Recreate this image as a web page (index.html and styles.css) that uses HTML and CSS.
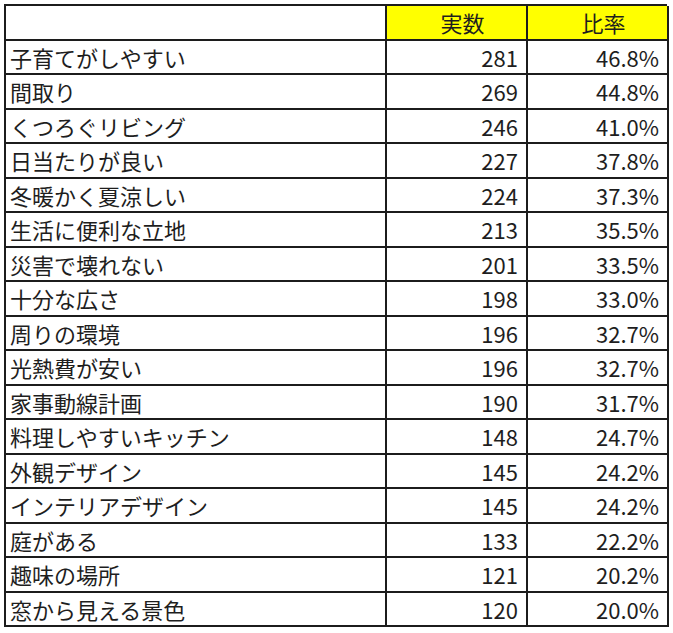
FILE: index.html
```html
<!DOCTYPE html>
<html lang="ja">
<head>
<meta charset="utf-8">
<link rel="stylesheet" href="styles.css">
</head>
<body>
<div class="table">
  <div class="cell label head-blank"></div><div class="cell head">実数</div><div class="cell head">比率</div>
  <div class="cell label">子育てがしやすい</div><div class="cell num">281</div><div class="cell num">46.8%</div>
  <div class="cell label">間取り</div><div class="cell num">269</div><div class="cell num">44.8%</div>
  <div class="cell label">くつろぐリビング</div><div class="cell num">246</div><div class="cell num">41.0%</div>
  <div class="cell label">日当たりが良い</div><div class="cell num">227</div><div class="cell num">37.8%</div>
  <div class="cell label">冬暖かく夏涼しい</div><div class="cell num">224</div><div class="cell num">37.3%</div>
  <div class="cell label">生活に便利な立地</div><div class="cell num">213</div><div class="cell num">35.5%</div>
  <div class="cell label">災害で壊れない</div><div class="cell num">201</div><div class="cell num">33.5%</div>
  <div class="cell label">十分な広さ</div><div class="cell num">198</div><div class="cell num">33.0%</div>
  <div class="cell label">周りの環境</div><div class="cell num">196</div><div class="cell num">32.7%</div>
  <div class="cell label">光熱費が安い</div><div class="cell num">196</div><div class="cell num">32.7%</div>
  <div class="cell label">家事動線計画</div><div class="cell num">190</div><div class="cell num">31.7%</div>
  <div class="cell label">料理しやすいキッチン</div><div class="cell num">148</div><div class="cell num">24.7%</div>
  <div class="cell label">外観デザイン</div><div class="cell num">145</div><div class="cell num">24.2%</div>
  <div class="cell label">インテリアデザイン</div><div class="cell num">145</div><div class="cell num">24.2%</div>
  <div class="cell label">庭がある</div><div class="cell num">133</div><div class="cell num">22.2%</div>
  <div class="cell label">趣味の場所</div><div class="cell num">121</div><div class="cell num">20.2%</div>
  <div class="cell label">窓から見える景色</div><div class="cell num">120</div><div class="cell num">20.0%</div>
</div>
</body>
</html>
```
FILE: styles.css
```css
html, body {
  margin: 0;
  padding: 0;
  background: #ffffff;
}
body {
  padding: 4px 0 0 4px;
  font-family: "Noto Sans CJK JP", "Noto Sans", sans-serif;
  color: #1e1e1e;
}
.table {
  display: grid;
  grid-template-columns: 381px 141px 141px;
  grid-template-rows: repeat(18, 1fr);
  width: 663px;
  height: 623px;
  box-sizing: border-box;
  border-top: 2px solid #1c1c1c;
  border-left: 2px solid #1c1c1c;
}
.cell {
  border-right: 2px solid #1c1c1c;
  border-bottom: 2px solid #1c1c1c;
  display: flex;
  align-items: center;
  font-size: 22px;
  line-height: 1;
  white-space: nowrap;
  overflow: hidden;
}
.label {
  padding-left: 4px;
}
.head {
  background: #ffff00;
  justify-content: center;
  padding-left: 12px;
}
.num {
  justify-content: flex-end;
  padding-right: 8px;
}
```
